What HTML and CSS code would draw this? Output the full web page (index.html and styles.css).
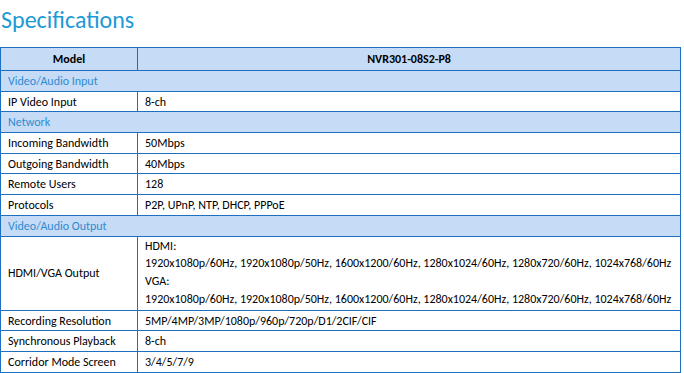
FILE: index.html
```html
<!DOCTYPE html>
<html>
<head>
<meta charset="utf-8">
<link rel="stylesheet" href="styles.css">
</head>
<body>
<h1 class="title">Specifications</h1>
<table class="spec">
  <colgroup><col class="c1"><col class="c2"></colgroup>
  <tr class="head"><th>Model</th><th>NVR301-08S2-P8</th></tr>
  <tr class="sec"><td colspan="2">Video/Audio Input</td></tr>
  <tr><td>IP Video Input</td><td>8-ch</td></tr>
  <tr class="sec"><td colspan="2">Network</td></tr>
  <tr><td>Incoming Bandwidth</td><td>50Mbps</td></tr>
  <tr><td>Outgoing Bandwidth</td><td>40Mbps</td></tr>
  <tr><td>Remote Users</td><td>128</td></tr>
  <tr><td>Protocols</td><td>P2P, UPnP, NTP, DHCP, PPPoE</td></tr>
  <tr class="sec"><td colspan="2">Video/Audio Output</td></tr>
  <tr class="multi"><td>HDMI/VGA Output</td><td><div>HDMI:</div><div>1920x1080p/60Hz, 1920x1080p/50Hz, 1600x1200/60Hz, 1280x1024/60Hz, 1280x720/60Hz, 1024x768/60Hz</div><div>VGA:</div><div>1920x1080p/60Hz, 1920x1080p/50Hz, 1600x1200/60Hz, 1280x1024/60Hz, 1280x720/60Hz, 1024x768/60Hz</div></td></tr>
  <tr><td>Recording Resolution</td><td>5MP/4MP/3MP/1080p/960p/720p/D1/2CIF/CIF</td></tr>
  <tr><td>Synchronous Playback</td><td>8-ch</td></tr>
  <tr><td>Corridor Mode Screen</td><td>3/4/5/7/9</td></tr>
  <tr class="sec"><td colspan="2">&nbsp;</td></tr>
</table>
</body>
</html>
```
FILE: styles.css
```css
html, body {
  margin: 0;
  padding: 0;
  background: #fff;
}
body {
  font-family: Carlito, Calibri, "Open Sans", sans-serif;
  color: #000;
  overflow: hidden;
}
.title {
  margin: 5px 0 12px 1px;
  font-size: 24px;
  line-height: 30px;
  font-weight: normal;
  color: #1b9ad6;
}
.spec {
  border-collapse: collapse;
  width: 681px;
  font-size: 12px;
  table-layout: fixed;
}
.c1 { width: 137px; }
.spec td, .spec th {
  border: 1px solid #1f6fc0;
  padding: 0 7px;
  height: 19.7px;
  line-height: 14px;
  text-align: left;
  vertical-align: middle;
  white-space: nowrap;
}
.spec .head th {
  background: #c6dbf5;
  font-weight: bold;
  text-align: center;
  height: 22px;
  font-size: 12px;
}
.spec .sec td {
  background: #c6dbf5;
  color: #2e8bd2;
}
.spec .multi td {
  padding-top: 1px;
  padding-bottom: 1px;
}
.spec .multi td div {
  line-height: 17.8px;
}
```
